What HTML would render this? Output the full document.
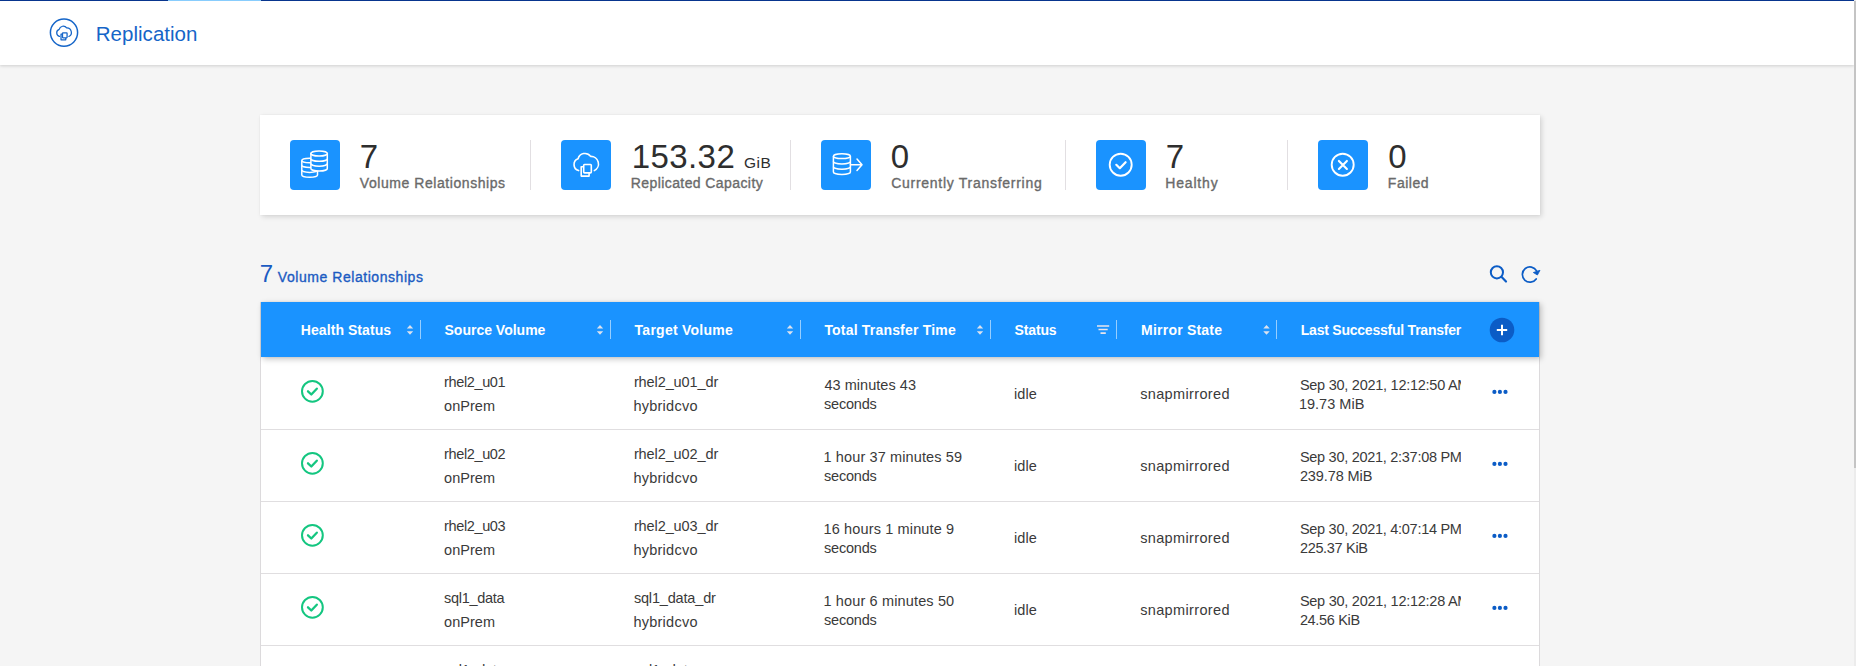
<!DOCTYPE html>
<html>
<head>
<meta charset="utf-8">
<style>
*{box-sizing:border-box;margin:0;padding:0}
html,body{width:1856px;height:666px;overflow:hidden;background:#f5f5f5;font-family:"Liberation Sans",sans-serif;position:relative}
.a{position:absolute;white-space:nowrap;line-height:1}
svg{position:absolute;overflow:visible}
#topline{position:absolute;left:0;top:0;width:1854px;height:1px;background:#08358e}
#topseg{position:absolute;left:168px;top:0;width:93px;height:1px;background:#88cdfd}
#hdr{position:absolute;left:0;top:1px;width:1854px;height:64px;background:#fff;box-shadow:0 1px 3px rgba(0,0,0,.16)}
#sb{position:absolute;left:1854px;top:0;width:2px;height:666px;background:#ececec}
#sbt{position:absolute;left:1854px;top:1px;width:2px;height:467px;background:#c4c4c4}
#card{position:absolute;left:260px;top:115px;width:1280px;height:100px;background:#fff;box-shadow:2px 2px 5px rgba(0,0,0,.13),0 0 2px rgba(0,0,0,.05)}
.ib{position:absolute;top:140px;width:50px;height:50px;background:#1a93ff;border-radius:4px}
.ib svg{left:0;top:0}
.dv{position:absolute;top:140px;width:1px;height:50px;background:#e2dfe2}
#tbl{position:absolute;left:260px;top:302px;width:1280px;height:400px;background:#fff;border-left:1px solid #dcdadc;border-right:1px solid #dcdadc}
#th{position:absolute;left:261px;top:302px;width:1278px;height:55px;background:#1a93ff;box-shadow:2px 2px 6px rgba(0,0,0,.24),0 0 2px rgba(0,0,0,.08)}
.hd{position:absolute;top:320px;width:1px;height:19px;background:rgba(255,255,255,.55)}
.rs{position:absolute;left:261px;width:1278px;height:1px;background:#e0dee0}
</style>
</head>
<body>
<div id="hdr"></div><div id="topline"></div><div id="topseg"></div><div id="sb"></div><div id="sbt"></div>
<svg style="left:0;top:0" width="100" height="66" viewBox="0 0 100 66">
<circle cx="64" cy="32.6" r="13.6" fill="none" stroke="#1565c8" stroke-width="1.5"/>
<g transform="translate(48.9,18.1) scale(0.6)"><path d="M17.6,30.6 A6.2,6.2 0 0 1 17.1,18.8 A7,7 0 0 1 29.6,16.4 A7.5,7.5 0 0 1 33.3,30.6" fill="none" stroke="#1565c8" stroke-width="2.1" stroke-linecap="round" stroke-linejoin="round"/>
<path d="M22.7,26.8 H20.2 V36.1 H28.1 V32.9" fill="none" stroke="#1565c8" stroke-width="2.1" stroke-linejoin="round"/>
<rect x="22.7" y="24.5" width="7.6" height="8.4" rx="0.8" fill="#fff" stroke="#1565c8" stroke-width="2.1"/></g>
</svg>
<div id="card"></div>
<div class="ib" style="left:290px"><svg width="50" height="50" viewBox="0 0 50 50"><path d="M11.8,20.5 V35 A7.85,2.3 0 0 0 27.5,35 V20.5" fill="none" stroke="#fff" stroke-width="1.5"/>
<ellipse cx="19.65" cy="20.5" rx="7.85" ry="2.3" fill="none" stroke="#fff" stroke-width="1.5"/>
<path d="M11.8,25.2 A7.85,2.3 0 0 0 27.5,25.2 M11.8,30.1 A7.85,2.3 0 0 0 27.5,30.1" fill="none" stroke="#fff" stroke-width="1.5"/>
<path d="M20.9,13.5 V28.4 A8.2,2.6 0 0 0 37.3,28.4 V13.5 Z" fill="#1a93ff" stroke="#fff" stroke-width="1.5"/>
<ellipse cx="29.1" cy="13.5" rx="8.2" ry="2.6" fill="#1a93ff" stroke="#fff" stroke-width="1.5"/>
<path d="M20.9,18.7 A8.2,2.6 0 0 0 37.3,18.7 M20.9,23.6 A8.2,2.6 0 0 0 37.3,23.6" fill="none" stroke="#fff" stroke-width="1.5"/></svg></div>
<div class="ib" style="left:561px"><svg width="50" height="50" viewBox="0 0 50 50"><path d="M17.6,30.6 A6.2,6.2 0 0 1 17.1,18.8 A7,7 0 0 1 29.6,16.4 A7.5,7.5 0 0 1 33.3,30.6" fill="none" stroke="#fff" stroke-width="1.6" stroke-linecap="round" stroke-linejoin="round"/>
<path d="M22.7,26.8 H20.2 V36.1 H28.1 V32.9" fill="none" stroke="#fff" stroke-width="1.6" stroke-linejoin="round"/>
<rect x="22.7" y="24.5" width="7.6" height="8.4" rx="0.8" fill="#1a93ff" stroke="#fff" stroke-width="1.6"/></svg></div>
<div class="ib" style="left:821px"><svg width="50" height="50" viewBox="0 0 50 50"><path d="M12.4,16.2 V32 A8.5,2.4 0 0 0 29.4,32 V16.2" fill="none" stroke="#fff" stroke-width="1.5"/>
<ellipse cx="20.9" cy="16.2" rx="8.5" ry="2.4" fill="none" stroke="#fff" stroke-width="1.5"/>
<path d="M12.4,21.5 A8.5,2.4 0 0 0 29.4,21.5 M12.4,26.8 A8.5,2.4 0 0 0 29.4,26.8" fill="none" stroke="#fff" stroke-width="1.5"/>
<path d="M29.4,24.7 H40.6 M36,19 L41,24.7 L36,30.5" fill="none" stroke="#fff" stroke-width="1.5" stroke-linecap="round" stroke-linejoin="round"/></svg></div>
<div class="ib" style="left:1096px"><svg width="50" height="50" viewBox="0 0 50 50"><circle cx="24.7" cy="24.7" r="11" fill="none" stroke="#fff" stroke-width="1.9"/>
<path d="M20.3,24.8 L23.8,28.2 L29.6,22.2" fill="none" stroke="#fff" stroke-width="2.2" stroke-linecap="round" stroke-linejoin="round"/></svg></div>
<div class="ib" style="left:1318px"><svg width="50" height="50" viewBox="0 0 50 50"><circle cx="24.7" cy="24.7" r="11" fill="none" stroke="#fff" stroke-width="1.9"/>
<path d="M20.9,20.9 L28.9,28.9 M28.9,20.9 L20.9,28.9" fill="none" stroke="#fff" stroke-width="2.1" stroke-linecap="round"/></svg></div>
<div class="dv" style="left:530px"></div>
<div class="dv" style="left:790px"></div>
<div class="dv" style="left:1065px"></div>
<div class="dv" style="left:1287px"></div>
<svg style="left:1480px;top:255px" width="70" height="40" viewBox="1480 255 70 40">
<circle cx="1496.9" cy="272.3" r="6.1" fill="none" stroke="#0b5cc6" stroke-width="2"/>
<path d="M1501.4,276.8 L1506,281.5" stroke="#0b5cc6" stroke-width="2.2" stroke-linecap="round"/>
<path d="M1536.2,278.9 A7.6,7.6 0 1 1 1536.6,270.8" fill="none" stroke="#0b5cc6" stroke-width="1.7" stroke-linecap="round"/>
<path d="M1533.3,272.5 L1540,270.3 L1537.4,275 Z" fill="#0b5cc6" stroke="#0b5cc6" stroke-width="0.8" stroke-linejoin="round"/>
</svg>
<div id="tbl"></div><div id="th"></div>
<div class="hd" style="left:420px"></div>
<div class="hd" style="left:610px"></div>
<div class="hd" style="left:800px"></div>
<div class="hd" style="left:990px"></div>
<div class="hd" style="left:1116px"></div>
<div class="hd" style="left:1276px"></div>
<svg style="left:0;top:0" width="1856" height="666" viewBox="0 0 1856 666"><path d="M406.8,328.5 H413.2 L410,325 Z M406.8,331.2 H413.2 L410,334.7 Z" fill="rgba(255,240,235,.85)"/><path d="M596.8,328.5 H603.2 L600,325 Z M596.8,331.2 H603.2 L600,334.7 Z" fill="rgba(255,240,235,.85)"/><path d="M786.8,328.5 H793.2 L790,325 Z M786.8,331.2 H793.2 L790,334.7 Z" fill="rgba(255,240,235,.85)"/><path d="M976.8,328.5 H983.2 L980,325 Z M976.8,331.2 H983.2 L980,334.7 Z" fill="rgba(255,240,235,.85)"/><path d="M1263.3,328.5 H1269.7 L1266.5,325 Z M1263.3,331.2 H1269.7 L1266.5,334.7 Z" fill="rgba(255,240,235,.85)"/><path d="M1097,326 H1109.2 M1098.5,329.5 H1107.7 M1100.5,333.1 H1105.8" stroke="rgba(255,240,235,.9)" stroke-width="1.6"/><circle cx="1502" cy="330" r="12.3" fill="#0b5cc6"/><path d="M1496.8,330 H1507.2 M1502,324.8 V335.2" stroke="#fff" stroke-width="2"/><circle cx="312.4" cy="391.3" r="10.4" fill="none" stroke="#14c680" stroke-width="2"/><path d="M308,391.3 L311.3,394.5 L316.8,388.7" fill="none" stroke="#14c680" stroke-width="2.3" stroke-linecap="round" stroke-linejoin="round"/><circle cx="1494.4" cy="391.9" r="2.1" fill="#0b5cc6"/><circle cx="1499.9" cy="391.9" r="2.1" fill="#0b5cc6"/><circle cx="1505.5" cy="391.9" r="2.1" fill="#0b5cc6"/><circle cx="312.4" cy="463.3" r="10.4" fill="none" stroke="#14c680" stroke-width="2"/><path d="M308,463.3 L311.3,466.5 L316.8,460.7" fill="none" stroke="#14c680" stroke-width="2.3" stroke-linecap="round" stroke-linejoin="round"/><circle cx="1494.4" cy="463.9" r="2.1" fill="#0b5cc6"/><circle cx="1499.9" cy="463.9" r="2.1" fill="#0b5cc6"/><circle cx="1505.5" cy="463.9" r="2.1" fill="#0b5cc6"/><circle cx="312.4" cy="535.3" r="10.4" fill="none" stroke="#14c680" stroke-width="2"/><path d="M308,535.3 L311.3,538.5 L316.8,532.6999999999999" fill="none" stroke="#14c680" stroke-width="2.3" stroke-linecap="round" stroke-linejoin="round"/><circle cx="1494.4" cy="535.9" r="2.1" fill="#0b5cc6"/><circle cx="1499.9" cy="535.9" r="2.1" fill="#0b5cc6"/><circle cx="1505.5" cy="535.9" r="2.1" fill="#0b5cc6"/><circle cx="312.4" cy="607.3" r="10.4" fill="none" stroke="#14c680" stroke-width="2"/><path d="M308,607.3 L311.3,610.5 L316.8,604.6999999999999" fill="none" stroke="#14c680" stroke-width="2.3" stroke-linecap="round" stroke-linejoin="round"/><circle cx="1494.4" cy="607.9" r="2.1" fill="#0b5cc6"/><circle cx="1499.9" cy="607.9" r="2.1" fill="#0b5cc6"/><circle cx="1505.5" cy="607.9" r="2.1" fill="#0b5cc6"/><circle cx="312.4" cy="679.3" r="10.4" fill="none" stroke="#14c680" stroke-width="2"/><path d="M308,679.3 L311.3,682.5 L316.8,676.6999999999999" fill="none" stroke="#14c680" stroke-width="2.3" stroke-linecap="round" stroke-linejoin="round"/><circle cx="1494.4" cy="679.9" r="2.1" fill="#0b5cc6"/><circle cx="1499.9" cy="679.9" r="2.1" fill="#0b5cc6"/><circle cx="1505.5" cy="679.9" r="2.1" fill="#0b5cc6"/></svg>
<div class="rs" style="top:429px"></div>
<div class="rs" style="top:501px"></div>
<div class="rs" style="top:573px"></div>
<div class="rs" style="top:645px"></div>
<div class="a" style="left:95.8px;top:24px;font-size:20.5px;color:#1565c8;letter-spacing:0.02px">Replication</div>
<div class="a" style="left:359.7px;top:140px;font-size:33px;color:#2e2e2e">7</div>
<div class="a" style="left:359.8px;top:176px;font-size:14px;color:#6a6a6a;-webkit-text-stroke:0.35px #6a6a6a;letter-spacing:0.56px">Volume Relationships</div>
<div class="a" style="left:631.8px;top:140px;font-size:33px;color:#2e2e2e;letter-spacing:0.4px">153.32</div>
<div class="a" style="left:744.1px;top:155px;font-size:15.5px;color:#2e2e2e;letter-spacing:0.45px">GiB</div>
<div class="a" style="left:630.8px;top:176px;font-size:14px;color:#6a6a6a;-webkit-text-stroke:0.35px #6a6a6a;letter-spacing:0.41px">Replicated Capacity</div>
<div class="a" style="left:890.7px;top:140px;font-size:33px;color:#2e2e2e">0</div>
<div class="a" style="left:891.2px;top:176px;font-size:14px;color:#6a6a6a;-webkit-text-stroke:0.35px #6a6a6a;letter-spacing:0.72px">Currently Transferring</div>
<div class="a" style="left:1165.8px;top:140px;font-size:33px;color:#2e2e2e">7</div>
<div class="a" style="left:1165.3px;top:176px;font-size:14px;color:#6a6a6a;-webkit-text-stroke:0.35px #6a6a6a;letter-spacing:0.81px">Healthy</div>
<div class="a" style="left:1388.3px;top:140px;font-size:33px;color:#2e2e2e">0</div>
<div class="a" style="left:1387.8px;top:176px;font-size:14px;color:#6a6a6a;-webkit-text-stroke:0.35px #6a6a6a;letter-spacing:0.53px">Failed</div>
<div class="a" style="left:259.8px;top:262px;font-size:24px;color:#1b5bc2">7</div>
<div class="a" style="left:277.8px;top:270px;font-size:14px;color:#1b5bc2;-webkit-text-stroke:0.35px #1b5bc2;letter-spacing:0.55px">Volume Relationships</div>
<div class="a" style="left:300.8px;top:323px;font-size:14px;color:#fff;font-weight:700;letter-spacing:0.07px">Health Status</div>
<div class="a" style="left:444.5px;top:323px;font-size:14px;color:#fff;font-weight:700">Source Volume</div>
<div class="a" style="left:634.6px;top:323px;font-size:14px;color:#fff;font-weight:700;letter-spacing:0.25px">Target Volume</div>
<div class="a" style="left:824.4px;top:323px;font-size:14px;color:#fff;font-weight:700;letter-spacing:0.19px">Total Transfer Time</div>
<div class="a" style="left:1014.6px;top:323px;font-size:14px;color:#fff;font-weight:700;letter-spacing:-0.16px">Status</div>
<div class="a" style="left:1141.1px;top:323px;font-size:14px;color:#fff;font-weight:700;letter-spacing:0.21px">Mirror State</div>
<div class="a" style="left:1300.8px;top:323px;font-size:14px;color:#fff;font-weight:700;letter-spacing:-0.23px">Last Successful Transfer</div>
<div class="a" style="left:444.1px;top:375px;font-size:14.5px;color:#3a3a3a;letter-spacing:-0.37px">rhel2_u01</div>
<div class="a" style="left:444.1px;top:399px;font-size:14.5px;color:#3a3a3a;letter-spacing:0.02px">onPrem</div>
<div class="a" style="left:633.9px;top:375px;font-size:14.5px;color:#3a3a3a;letter-spacing:-0.1px">rhel2_u01_dr</div>
<div class="a" style="left:633.4px;top:399px;font-size:14.5px;color:#3a3a3a;letter-spacing:0.25px">hybridcvo</div>
<div class="a" style="left:824.5px;top:378px;font-size:14.5px;color:#3a3a3a;letter-spacing:0.03px">43 minutes 43</div>
<div class="a" style="left:824px;top:397px;font-size:14.5px;color:#3a3a3a;letter-spacing:-0.19px">seconds</div>
<div class="a" style="left:1014px;top:387px;font-size:14.5px;color:#3a3a3a;letter-spacing:0.06px">idle</div>
<div class="a" style="left:1140.2px;top:387px;font-size:14.5px;color:#3a3a3a;letter-spacing:0.35px">snapmirrored</div>
<div class="a" style="left:1299.9px;top:378px;font-size:14.5px;color:#3a3a3a;letter-spacing:-0.26px;width:161.1px;overflow:hidden">Sep 30, 2021, 12:12:50 AM</div>
<div class="a" style="left:1298.9px;top:397px;font-size:14.5px;color:#3a3a3a;letter-spacing:0.02px">19.73 MiB</div>
<div class="a" style="left:444.1px;top:447px;font-size:14.5px;color:#3a3a3a;letter-spacing:-0.37px">rhel2_u02</div>
<div class="a" style="left:444.1px;top:471px;font-size:14.5px;color:#3a3a3a;letter-spacing:0.02px">onPrem</div>
<div class="a" style="left:633.9px;top:447px;font-size:14.5px;color:#3a3a3a;letter-spacing:-0.1px">rhel2_u02_dr</div>
<div class="a" style="left:633.4px;top:471px;font-size:14.5px;color:#3a3a3a;letter-spacing:0.25px">hybridcvo</div>
<div class="a" style="left:823.5px;top:450px;font-size:14.5px;color:#3a3a3a;letter-spacing:0.12px">1 hour 37 minutes 59</div>
<div class="a" style="left:824px;top:469px;font-size:14.5px;color:#3a3a3a;letter-spacing:-0.19px">seconds</div>
<div class="a" style="left:1014px;top:459px;font-size:14.5px;color:#3a3a3a;letter-spacing:0.06px">idle</div>
<div class="a" style="left:1140.2px;top:459px;font-size:14.5px;color:#3a3a3a;letter-spacing:0.35px">snapmirrored</div>
<div class="a" style="left:1299.9px;top:450px;font-size:14.5px;color:#3a3a3a;letter-spacing:-0.28px;width:161.1px;overflow:hidden">Sep 30, 2021, 2:37:08 PM</div>
<div class="a" style="left:1299.9px;top:469px;font-size:14.5px;color:#3a3a3a;letter-spacing:-0.1px">239.78 MiB</div>
<div class="a" style="left:444.1px;top:519px;font-size:14.5px;color:#3a3a3a;letter-spacing:-0.37px">rhel2_u03</div>
<div class="a" style="left:444.1px;top:543px;font-size:14.5px;color:#3a3a3a;letter-spacing:0.02px">onPrem</div>
<div class="a" style="left:633.9px;top:519px;font-size:14.5px;color:#3a3a3a;letter-spacing:-0.1px">rhel2_u03_dr</div>
<div class="a" style="left:633.4px;top:543px;font-size:14.5px;color:#3a3a3a;letter-spacing:0.25px">hybridcvo</div>
<div class="a" style="left:823.5px;top:522px;font-size:14.5px;color:#3a3a3a;letter-spacing:0.14px">16 hours 1 minute 9</div>
<div class="a" style="left:824px;top:541px;font-size:14.5px;color:#3a3a3a;letter-spacing:-0.19px">seconds</div>
<div class="a" style="left:1014px;top:531px;font-size:14.5px;color:#3a3a3a;letter-spacing:0.06px">idle</div>
<div class="a" style="left:1140.2px;top:531px;font-size:14.5px;color:#3a3a3a;letter-spacing:0.35px">snapmirrored</div>
<div class="a" style="left:1299.9px;top:522px;font-size:14.5px;color:#3a3a3a;letter-spacing:-0.28px;width:161.1px;overflow:hidden">Sep 30, 2021, 4:07:14 PM</div>
<div class="a" style="left:1299.9px;top:541px;font-size:14.5px;color:#3a3a3a;letter-spacing:-0.32px">225.37 KiB</div>
<div class="a" style="left:444.1px;top:591px;font-size:14.5px;color:#3a3a3a;letter-spacing:-0.3px">sql1_data</div>
<div class="a" style="left:444.1px;top:615px;font-size:14.5px;color:#3a3a3a;letter-spacing:0.02px">onPrem</div>
<div class="a" style="left:633.9px;top:591px;font-size:14.5px;color:#3a3a3a;letter-spacing:-0.17px">sql1_data_dr</div>
<div class="a" style="left:633.4px;top:615px;font-size:14.5px;color:#3a3a3a;letter-spacing:0.25px">hybridcvo</div>
<div class="a" style="left:823.5px;top:594px;font-size:14.5px;color:#3a3a3a;letter-spacing:0.14px">1 hour 6 minutes 50</div>
<div class="a" style="left:824px;top:613px;font-size:14.5px;color:#3a3a3a;letter-spacing:-0.19px">seconds</div>
<div class="a" style="left:1014px;top:603px;font-size:14.5px;color:#3a3a3a;letter-spacing:0.06px">idle</div>
<div class="a" style="left:1140.2px;top:603px;font-size:14.5px;color:#3a3a3a;letter-spacing:0.35px">snapmirrored</div>
<div class="a" style="left:1299.9px;top:594px;font-size:14.5px;color:#3a3a3a;letter-spacing:-0.26px;width:161.1px;overflow:hidden">Sep 30, 2021, 12:12:28 AM</div>
<div class="a" style="left:1299.9px;top:613px;font-size:14.5px;color:#3a3a3a;letter-spacing:-0.33px">24.56 KiB</div>
<div class="a" style="left:444.1px;top:663px;font-size:14.5px;color:#3a3a3a;letter-spacing:-0.3px">sql1_data</div>
<div class="a" style="left:444.1px;top:687px;font-size:14.5px;color:#3a3a3a;letter-spacing:0.02px">onPrem</div>
<div class="a" style="left:633.9px;top:663px;font-size:14.5px;color:#3a3a3a;letter-spacing:-0.15px">sql1_data_ro</div>
<div class="a" style="left:633.4px;top:687px;font-size:14.5px;color:#3a3a3a;letter-spacing:0.25px">hybridcvo</div>
<div class="a" style="left:823.5px;top:666px;font-size:14.5px;color:#3a3a3a;letter-spacing:0.14px">1 hour 6 minutes 50</div>
<div class="a" style="left:824px;top:685px;font-size:14.5px;color:#3a3a3a;letter-spacing:-0.19px">seconds</div>
<div class="a" style="left:1014px;top:675px;font-size:14.5px;color:#3a3a3a;letter-spacing:0.06px">idle</div>
<div class="a" style="left:1140.2px;top:675px;font-size:14.5px;color:#3a3a3a;letter-spacing:0.35px">snapmirrored</div>
<div class="a" style="left:1299.9px;top:666px;font-size:14.5px;color:#3a3a3a;letter-spacing:-0.26px;width:161.1px;overflow:hidden">Sep 30, 2021, 12:12:28 AM</div>
<div class="a" style="left:1299.9px;top:685px;font-size:14.5px;color:#3a3a3a;letter-spacing:-0.33px">24.56 KiB</div>
</body>
</html>
